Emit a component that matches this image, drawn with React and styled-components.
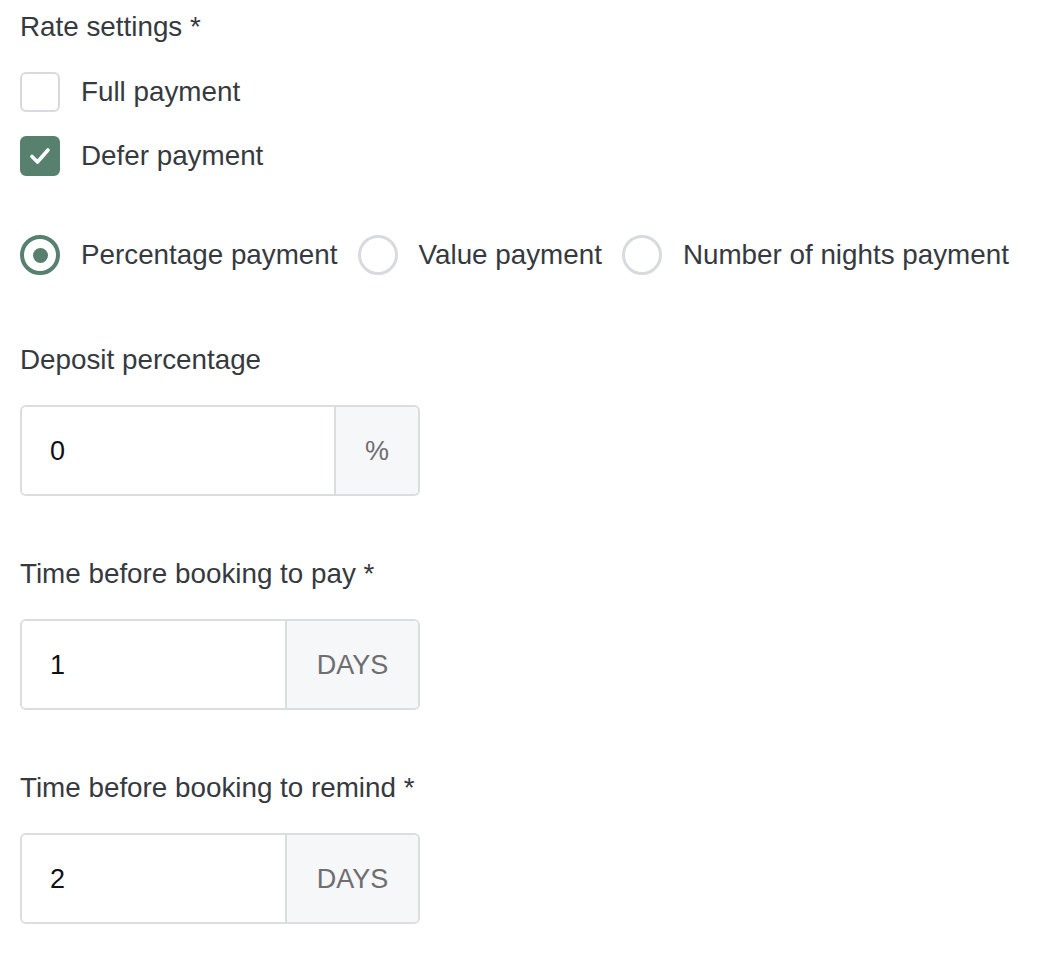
import React from "react";
import styled, { createGlobalStyle } from "styled-components";

const Global = createGlobalStyle`
  html, body { margin: 0; padding: 0; background: #ffffff; }
  body { font-family: "Liberation Sans", Arial, Helvetica, sans-serif; color: #363a40; }
`;

const Page = styled.div`
  padding: 6px 20px 30px 20px;
  display: flex;
  flex-direction: column;
`;

const Label = styled.div`
  font-size: 27.8px;
  line-height: 42px;
  color: #363a40;
`;

const CheckList = styled.div`
  display: flex;
  flex-direction: column;
  gap: 24px;
  margin-top: 24px;
`;

const Option = styled.label`
  display: flex;
  align-items: center;
  gap: 21px;
  font-size: 27.8px;
  line-height: 40px;
  color: #363a40;
  cursor: pointer;
`;

const Box = styled.span`
  box-sizing: border-box;
  width: 40px;
  height: 40px;
  border-radius: 6px;
  border: 2px solid ${(p) => (p.$checked ? "#58806f" : "#d9dadf")};
  background: ${(p) => (p.$checked ? "#58806f" : "#fff")};
  display: flex;
  align-items: center;
  justify-content: center;
  flex-shrink: 0;
`;

const RadioRow = styled.div`
  display: flex;
  align-items: center;
  gap: 20px;
  margin-top: 59px;
`;

const Circle = styled.span`
  box-sizing: border-box;
  width: 40px;
  height: 40px;
  border-radius: 50%;
  border: ${(p) => (p.$checked ? "4px solid #58806f" : "3px solid #d9dadf")};
  display: flex;
  align-items: center;
  justify-content: center;
  flex-shrink: 0;
  &::after {
    content: "";
    display: ${(p) => (p.$checked ? "block" : "none")};
    width: 15px;
    height: 15px;
    border-radius: 50%;
    background: #58806f;
  }
`;

const Group = styled.div`
  display: flex;
  flex-direction: column;
  gap: 24px;
  margin-top: ${(p) => p.$top}px;
`;

const InputGroup = styled.div`
  box-sizing: border-box;
  width: 400px;
  height: 91px;
  display: flex;
  border: 2px solid #dcdde1;
  border-radius: 6px;
  overflow: hidden;
`;

const Field = styled.div`
  flex: 1;
  display: flex;
  align-items: center;
  padding: 2px 0 0 28px;
  font-size: 27px;
  color: #111;
  background: #fff;
`;

const Addon = styled.div`
  box-sizing: border-box;
  width: ${(p) => p.$w}px;
  border-left: 2px solid #dcdde1;
  background: #f6f7f9;
  display: flex;
  align-items: center;
  justify-content: center;
  padding-top: 2px;
  font-size: 27px;
  color: #6e6e70;
`;

const Check = () => (
  <svg width="24" height="24" viewBox="0 0 24 24" fill="none">
    <path d="M4 12.5 L9.5 18 L20 6" stroke="#fff" strokeWidth="3.6" strokeLinecap="round" strokeLinejoin="round" />
  </svg>
);

const Checkbox = ({ checked, children }) => (
  <Option>
    <Box $checked={checked}>{checked && <Check />}</Box>
    {children}
  </Option>
);

const Radio = ({ checked, children }) => (
  <Option>
    <Circle $checked={checked} />
    {children}
  </Option>
);

const NumberField = ({ label, value, unit, unitWidth, top }) => (
  <Group $top={top}>
    <Label>{label}</Label>
    <InputGroup>
      <Field>{value}</Field>
      <Addon $w={unitWidth}>{unit}</Addon>
    </InputGroup>
  </Group>
);

export default function App() {
  return (
    <>
      <Global />
      <Page>
        <Label>Rate settings *</Label>
        <CheckList>
          <Checkbox checked={false}>Full payment</Checkbox>
          <Checkbox checked>Defer payment</Checkbox>
        </CheckList>
        <RadioRow>
          <Radio checked>Percentage payment</Radio>
          <Radio>Value payment</Radio>
          <Radio>Number of nights payment</Radio>
        </RadioRow>
        <NumberField top={64} label="Deposit percentage" value="0" unit="%" unitWidth={84} />
        <NumberField top={57} label="Time before booking to pay *" value="1" unit="DAYS" unitWidth={133} />
        <NumberField top={57} label="Time before booking to remind *" value="2" unit="DAYS" unitWidth={133} />
      </Page>
    </>
  );
}
